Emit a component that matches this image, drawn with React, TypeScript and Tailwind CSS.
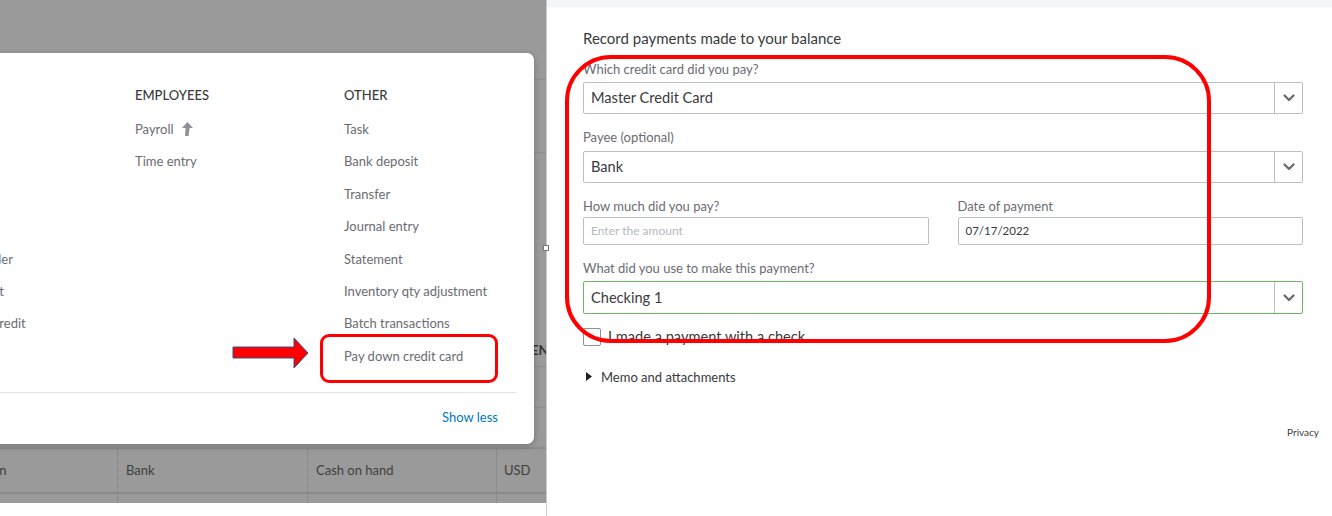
import React from "react";

const vendorItems = ["Expense", "Check", "Bill", "Pay bills", "Purchase order", "Vendor credit", "Credit card credit", "Print checks"];
const employeeItems = ["Payroll", "Time entry"];
const otherItems = [
  "Task",
  "Bank deposit",
  "Transfer",
  "Journal entry",
  "Statement",
  "Inventory qty adjustment",
  "Batch transactions",
  "Pay down credit card",
];

const Chevron = () => (
  <svg width="12" height="8" viewBox="0 0 12 8" fill="none">
    <path d="M1.5 1.5 L6 6 L10.5 1.5" stroke="#6b6c72" strokeWidth="2.3" strokeLinecap="round" strokeLinejoin="round" />
  </svg>
);

const UpgradeArrow = () => (
  <svg width="12" height="14" viewBox="0 0 12 14">
    <path d="M6.5 0 L12 6 L8.6 6 L7.6 14 L4 14 L4.6 6 L1 6 Z" fill="#8d9096" />
  </svg>
);

const Select = ({ value, green }: { value: string; green?: boolean }) => (
  <div
    className={
      green
        ? "flex h-[33px] rounded-[2px] border border-[#6ab964]"
        : "flex h-[32px] rounded-[2px] border border-[#babec5]"
    }
  >
    <div className="flex flex-1 items-center pl-[7px] text-[14.6px] text-[#393a3d]">{value}</div>
    <div className="flex w-[28px] items-center justify-center border-l border-[#babec5]">
      <Chevron />
    </div>
  </div>
);

const Column = ({ title, items, arrow }: { title: string; items: string[]; arrow?: boolean }) => (
  <div className="flex flex-col">
    <div className="text-[13px] leading-[18px] font-medium uppercase text-[#393a3d]">{title}</div>
    <div className="mt-[16px] flex flex-col gap-[14.4px]">
      {items.map((item, i) => (
        <div key={item} className="flex items-center gap-[7px] whitespace-nowrap text-[13px] leading-[18px] text-[#6b6c72]">
          {item}
          {arrow && i === 0 && <UpgradeArrow />}
        </div>
      ))}
    </div>
  </div>
);

const App = () => {
  return (
    <div className="relative flex h-[516px] w-[1332px] overflow-hidden bg-white font-['Lato',sans-serif]">
      {/* dimmed page behind the menu */}
      <div className="relative w-[546px] shrink-0 overflow-hidden">
        <div className="flex h-[503px] flex-col bg-[#9a9a9a] text-[13px] text-[#3f3f3f]">
          <div className="h-[80px] shrink-0 border-b border-[#8e8e8e]" />
          <div className="h-[73px] shrink-0 border-b border-[#8e8e8e]" />
          <div className="h-[183px] shrink-0" />
          <div className="grid h-[31px] shrink-0 grid-cols-[117px_190px_189px_1fr] items-center border-b border-[#8e8e8e] font-bold text-[#333]">
            <div className="pl-[8px]">NAME</div>
            <div className="pl-[8px]">TYPE</div>
            <div className="pl-[8px]">DETAIL TYPE</div>
            <div className="whitespace-nowrap">CURRENCY</div>
          </div>
          <div className="h-[41px] shrink-0 border-b border-[#8e8e8e]" />
          <div className="h-[40px] shrink-0 border-b border-[#8e8e8e]" />
          <div className="grid h-[46px] shrink-0 grid-cols-[117px_190px_189px_1fr] items-center border-b-2 border-t border-[#8a8a8a]">
            <div className="-ml-[84px] whitespace-nowrap">Petty cash Main</div>
            <div className="flex h-full items-center border-l border-dotted border-[#7e7e7e] pl-[8px]">Bank</div>
            <div className="flex h-full items-center border-l border-dotted border-[#7e7e7e] pl-[8px]">Cash on hand</div>
            <div className="flex h-full items-center border-l border-dotted border-[#7e7e7e] pl-[7px]">USD</div>
          </div>
          <div className="grid flex-1 grid-cols-[117px_190px_189px_1fr]">
            <div />
            <div className="border-l border-dotted border-[#7e7e7e]" />
            <div className="border-l border-dotted border-[#7e7e7e]" />
            <div className="border-l border-dotted border-[#7e7e7e]" />
          </div>
        </div>

        {/* "New" menu */}
        <div className="absolute left-[-100px] right-[12px] top-[53px] flex flex-col rounded-[7px] bg-white pb-[18px] pl-[27px] pr-[18px] pt-[33px] shadow-[0_2px_6px_rgba(0,0,0,0.25)]">
          <div className="flex">
            <div className="w-[208px] shrink-0">
              <Column title="Vendors" items={vendorItems} />
            </div>
            <div className="w-[209px] shrink-0">
              <Column title="Employees" items={employeeItems} arrow />
            </div>
            <div className="flex-1">
              <Column title="Other" items={otherItems} />
            </div>
          </div>
          <div className="mt-[27px] border-t border-[#e3e5e8]" />
          <div className="mt-[15px] pr-[18px] text-right text-[13px] leading-[18px] text-[#0077c5]">Show less</div>
        </div>

        {/* annotation: arrow and box */}
        <svg className="absolute left-[232px] top-[337px]" width="78" height="32" viewBox="0 0 78 32">
          <polygon points="1,10 62,10 62,1 76,16 62,31 62,21 1,21" fill="#ff0000" stroke="#2f528f" strokeWidth="1" />
        </svg>
        <div className="absolute left-[320px] top-[334px] h-[49px] w-[178px] rounded-[9px] border-[3px] border-[#ff0000]" />
      </div>

      {/* payment form */}
      <div className="flex flex-1 flex-col border-l border-[#c9cbcf]">
        <div className="h-[7px] bg-[#f4f5f8]" />
        <div className="flex flex-col pl-[36px] pr-[29px] pt-[21px]">
          <div className="text-[15px] leading-[20px] text-[#393a3d]">Record payments made to your balance</div>

          <div className="mt-[13px] text-[13px] leading-[16px] text-[#6b6c72]">Which credit card did you pay?</div>
          <div className="mt-[5px]">
            <Select value="Master Credit Card" />
          </div>

          <div className="mt-[15px] text-[13px] leading-[16px] text-[#6b6c72]">Payee (optional)</div>
          <div className="mt-[6px]">
            <Select value="Bank" />
          </div>

          <div className="mt-[15px] grid grid-cols-2 gap-[29px]">
            <div className="flex flex-col">
              <div className="text-[13px] leading-[16px] text-[#6b6c72]">How much did you pay?</div>
              <div className="mt-[3px] flex h-[28px] items-center rounded-[2px] border border-[#babec5] pl-[7px] text-[12px] text-[#b5b8bd]">
                Enter the amount
              </div>
            </div>
            <div className="flex flex-col">
              <div className="text-[13px] leading-[16px] text-[#6b6c72]">Date of payment</div>
              <div className="mt-[3px] flex h-[28px] items-center rounded-[2px] border border-[#babec5] pl-[7px] text-[11.5px] text-[#393a3d]">
                07/17/2022
              </div>
            </div>
          </div>

          <div className="mt-[15px] text-[13px] leading-[16px] text-[#6b6c72]">What did you use to make this payment?</div>
          <div className="mt-[5px]">
            <Select value="Checking 1" green />
          </div>

          <div className="mt-[12px] flex items-center gap-[7px]">
            <div className="h-[18px] w-[18px] rounded-[2px] border border-[#8d9096]" />
            <div className="text-[14.6px] text-[#393a3d]">I made a payment with a check</div>
          </div>

          <div className="mt-[19px] flex items-center">
            <svg className="ml-[3px]" width="6" height="9" viewBox="0 0 6 9">
              <polygon points="0,0 6,4.5 0,9" fill="#1f1f1f" />
            </svg>
            <div className="ml-[9px] text-[13px] leading-[20px] text-[#393a3d]">Memo and attachments</div>
          </div>

          <div className="-mr-[16px] mt-[38px] text-right text-[10px] leading-[14px] text-[#393a3d]">Privacy</div>
        </div>
      </div>

      {/* annotation around the form */}
      <div className="absolute left-[565px] top-[55px] h-[288px] w-[646px] rounded-[46px] border-[4px] border-[#ff0000]" />

      {/* resize handle */}
      <div className="absolute left-[543px] top-[245px] h-[6px] w-[6px] border border-[#777] bg-white" />
    </div>
  );
};

export default App;
